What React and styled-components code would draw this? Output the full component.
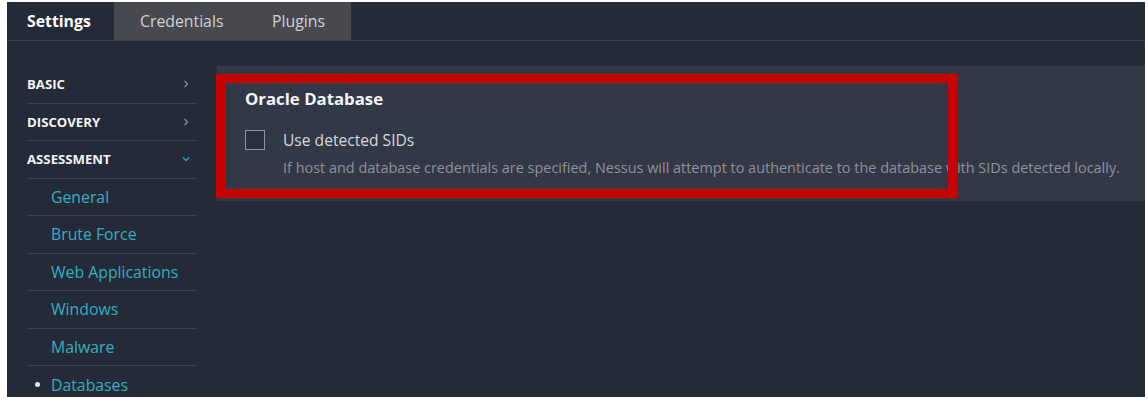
import styled, { createGlobalStyle } from "styled-components";

const GlobalStyle = createGlobalStyle`
  body {
    margin: 0;
    background: #ffffff;
    font-family: "Open Sans", "Liberation Sans", sans-serif;
  }
`;

const Frame = styled.div`
  margin: 2px 0 0 7px;
  width: 1138px;
  height: 395px;
  background: #252a38;
  display: flex;
  flex-direction: column;
  overflow: hidden;
`;

const TabBar = styled.div`
  display: flex;
  height: 38px;
  border-bottom: 1px solid #3a4051;
  flex-shrink: 0;
`;

const Tab = styled.div`
  display: flex;
  align-items: center;
  padding-left: ${(p) => (p.$active ? "20px" : "26px")};
  background: ${(p) => (p.$active ? "#252a38" : "#48494f")};
  color: ${(p) => (p.$active ? "#ffffff" : "#cfd1d6")};
  font-weight: ${(p) => (p.$active ? 700 : 400)};
  font-size: 15.8px;
  width: ${(p) => p.$w}px;
  box-sizing: border-box;
`;

const Body = styled.div`
  display: flex;
  padding-top: 25px;
  flex: 1;
`;

const Sidebar = styled.ul`
  list-style: none;
  margin: 0;
  padding: 0 20px;
  width: 210px;
  box-sizing: border-box;
  flex-shrink: 0;
`;

const NavRow = styled.li`
  display: flex;
  align-items: center;
  justify-content: space-between;
  height: 37.5px;
  box-sizing: border-box;
  border-bottom: 1px solid #3b4151;
  padding-left: ${(p) => (p.$sub ? "24px" : "0")};
  position: relative;
  color: ${(p) => (p.$sub ? "#34b0c0" : "#f2f3f5")};
  font-size: ${(p) => (p.$sub ? "15.8px" : "13.2px")};
  font-weight: ${(p) => (p.$sub ? 400 : 700)};
  text-transform: ${(p) => (p.$sub ? "none" : "uppercase")};
  &:last-child {
    border-bottom: none;
  }
`;

const Bullet = styled.span`
  position: absolute;
  left: 8px;
  top: 50%;
  width: 5px;
  height: 5px;
  margin-top: -3px;
  border-radius: 50%;
  background: #e4e6ea;
`;

const Chevron = styled.svg`
  width: 10px;
  height: 10px;
  margin-right: 6px;
`;

const Main = styled.div`
  flex: 1;
  display: flex;
  flex-direction: column;
`;

const Section = styled.div`
  position: relative;
  background: #333846;
  height: 135px;
  box-sizing: border-box;
  padding: 21px 0 0 28px;
`;

const SectionTitle = styled.h3`
  margin: 0;
  font-size: 16.8px;
  font-weight: 700;
  color: #f4f5f7;
  line-height: 24px;
`;

const Option = styled.label`
  display: flex;
  align-items: center;
  gap: 18px;
  margin-top: 18px;
  color: #d6d8dd;
  font-size: 15.6px;
`;

const Box = styled.span`
  width: 20px;
  height: 20px;
  box-sizing: border-box;
  border: 1.5px solid #8e929c;
  background: #2c3140;
`;

const Hint = styled.p`
  margin: 7px 0 0 38px;
  color: #8d929c;
  font-size: 14.45px;
  white-space: nowrap;
`;

const Highlight = styled.div`
  position: absolute;
  left: -1px;
  top: 8px;
  width: 741px;
  height: 124px;
  box-sizing: border-box;
  border: 9px solid #c70000;
  pointer-events: none;
`;

const right = (
  <Chevron viewBox="0 0 10 10">
    <path d="M3.5 2 L6.5 5 L3.5 8" fill="none" stroke="#8a8f9a" strokeWidth="1.2" />
  </Chevron>
);
const down = (
  <Chevron viewBox="0 0 10 10">
    <path d="M2 3.5 L5 6.5 L8 3.5" fill="none" stroke="#2aa7b8" strokeWidth="1.4" />
  </Chevron>
);

const subs = ["General", "Brute Force", "Web Applications", "Windows", "Malware", "Databases"];

export default function App() {
  return (
    <>
      <GlobalStyle />
      <Frame>
        <TabBar>
          <Tab $active $w={107}>Settings</Tab>
          <Tab $w={132}>Credentials</Tab>
          <Tab $w={105}>Plugins</Tab>
        </TabBar>
        <Body>
          <Sidebar>
            <NavRow>Basic{right}</NavRow>
            <NavRow>Discovery{right}</NavRow>
            <NavRow>Assessment{down}</NavRow>
            {subs.map((s) => (
              <NavRow $sub key={s}>
                {s === "Databases" && <Bullet />}
                {s}
              </NavRow>
            ))}
          </Sidebar>
          <Main>
            <Section>
              <SectionTitle>Oracle Database</SectionTitle>
              <Option>
                <Box />
                Use detected SIDs
              </Option>
              <Hint>
                If host and database credentials are specified, Nessus will attempt to authenticate to the database with SIDs detected locally.
              </Hint>
              <Highlight />
            </Section>
          </Main>
        </Body>
      </Frame>
    </>
  );
}
